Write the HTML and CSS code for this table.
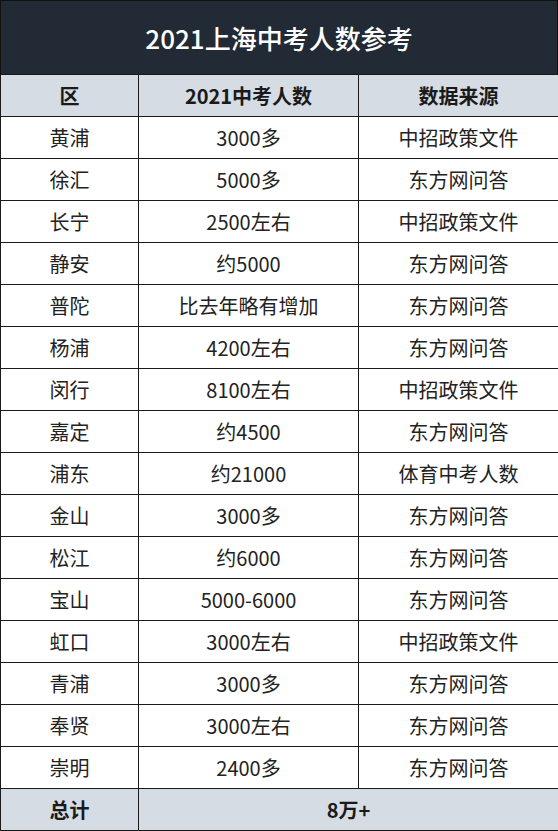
FILE: index.html
```html
<!DOCTYPE html>
<html lang="zh">
<head>
<meta charset="utf-8">
<link rel="stylesheet" href="styles.css">
</head>
<body>
<div class="sheet">
  <div class="title">2021上海中考人数参考</div>
  <table class="grid">
    <colgroup><col class="c1"><col class="c2"><col class="c3"></colgroup>
    <thead>
      <tr class="head"><th>区</th><th>2021中考人数</th><th>数据来源</th></tr>
    </thead>
    <tbody>
      <tr><td>黄浦</td><td>3000多</td><td>中招政策文件</td></tr>
      <tr><td>徐汇</td><td>5000多</td><td>东方网问答</td></tr>
      <tr><td>长宁</td><td>2500左右</td><td>中招政策文件</td></tr>
      <tr><td>静安</td><td>约5000</td><td>东方网问答</td></tr>
      <tr><td>普陀</td><td>比去年略有增加</td><td>东方网问答</td></tr>
      <tr><td>杨浦</td><td>4200左右</td><td>东方网问答</td></tr>
      <tr><td>闵行</td><td>8100左右</td><td>中招政策文件</td></tr>
      <tr><td>嘉定</td><td>约4500</td><td>东方网问答</td></tr>
      <tr><td>浦东</td><td>约21000</td><td>体育中考人数</td></tr>
      <tr><td>金山</td><td>3000多</td><td>东方网问答</td></tr>
      <tr><td>松江</td><td>约6000</td><td>东方网问答</td></tr>
      <tr><td>宝山</td><td>5000-6000</td><td>东方网问答</td></tr>
      <tr><td>虹口</td><td>3000左右</td><td>中招政策文件</td></tr>
      <tr><td>青浦</td><td>3000多</td><td>东方网问答</td></tr>
      <tr><td>奉贤</td><td>3000左右</td><td>东方网问答</td></tr>
      <tr><td>崇明</td><td>2400多</td><td>东方网问答</td></tr>
      <tr class="total"><th>总计</th><th colspan="2">8万+</th></tr>
    </tbody>
  </table>
</div>
</body>
</html>
```

FILE: styles.css
```css
html, body {
  margin: 0;
  padding: 0;
  background: #ffffff;
}
.sheet {
  width: 558px;
  font-family: "Noto Sans CJK SC", "Noto Sans", sans-serif;
  color: #1c1c1c;
}
.title {
  height: 74px;
  box-sizing: border-box;
  background: #222a35;
  color: #ffffff;
  font-size: 26px;
  font-weight: 500;
  display: flex;
  align-items: center;
  justify-content: center;
  border: 1px solid #111;
  border-bottom: none;
}
.grid {
  width: 558px;
  border-collapse: collapse;
  table-layout: fixed;
}
.c1 { width: 138px; }
.c2 { width: 220px; }
.c3 { width: 200px; }
.grid th, .grid td {
  border: 1px solid #1a1a1a;
  height: 41px;
  padding: 0;
  text-align: center;
  vertical-align: middle;
  font-size: 20px;
  line-height: 1;
}
.grid td {
  font-weight: 400;
  color: #222222;
}
.head th, .total th {
  background: #d6dce4;
  font-weight: 700;
  color: #1a1a1a;
}
```
